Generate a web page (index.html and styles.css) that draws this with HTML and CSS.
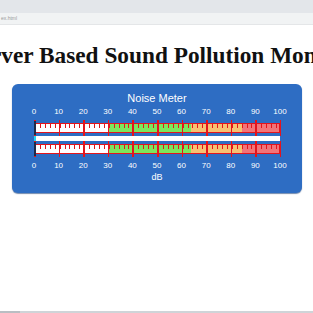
FILE: index.html
```html
<!DOCTYPE html>
<html lang="en">
<head>
    <meta charset="UTF-8">
    <meta name="viewport" content="width=device-width, initial-scale=1.0">
    <link rel="stylesheet" href="styles.css">
    <title>Noise Meter</title>
</head>
<body>
    <div class="tabs"></div>
    <div class="address">ex.html</div>

    <div class="title">
        <h1>IoT Server Based Sound Pollution Monitoring</h1>
    </div>

    <div class="panel">
        <div class="panel-title">Noise Meter</div>
        <div class="scale">
            <span>0</span><span>10</span><span>20</span><span>30</span><span>40</span><span>50</span>
            <span>60</span><span>70</span><span>80</span><span>90</span><span>100</span>
        </div>
        <div class="bar"><div class="needle"></div><div class="major"></div></div>
        <div class="level"><div class="level-fill"></div></div>
        <div class="bar"><div class="needle"></div><div class="major"></div></div>
        <div class="scale bottom">
            <span>0</span><span>10</span><span>20</span><span>30</span><span>40</span><span>50</span>
            <span>60</span><span>70</span><span>80</span><span>90</span><span>100</span>
        </div>
        <div class="unit">dB</div>
    </div>

    <div class="statusbar"></div>
</body>
</html>
```

FILE: styles.css
```css
body {
    margin: 0;
    height: 100vh;
    display: flex;
    flex-direction: column;
    font-family: "Liberation Sans", Arial, sans-serif;
    background: #fff;
    overflow: hidden;
}

.tabs {
    height: 13px;
    background-color: #e3e6ea;
}

.address {
    height: 11px;
    background-color: #f1f3f4;
    border-bottom: 1px solid #e4e6e8;
    font-size: 5px;
    line-height: 11px;
    color: #9a9a9a;
    padding-left: 1px;
}

.title {
    display: flex;
    justify-content: center;
    overflow: hidden;
    margin-top: 17px;
}

.title h1 {
    margin: 0 0 0 -3px;
    white-space: nowrap;
    font-family: "Liberation Serif", "Times New Roman", serif;
    font-size: 23.3px;
    line-height: 26px;
    color: #111;
}

.panel {
    margin: 16px 11px 0 12px;
    height: 109px;
    box-sizing: border-box;
    padding: 8px 22px 0 22px;
    background-color: #2e6dc3;
    border-radius: 6px;
    box-shadow: 0 1px 1px rgba(20, 60, 120, 0.6);
    color: #fff;
}

.panel-title {
    text-align: center;
    font-size: 11px;
    line-height: 13px;
}

.scale {
    display: flex;
    margin: 2px -12.3px 0 -12.3px;
    font-size: 8px;
    line-height: 10px;
}

.scale span {
    width: 24.6px;
    text-align: center;
}

.scale.bottom {
    margin-top: 7px;
}

.bar {
    position: relative;
    height: 10px;
    box-sizing: border-box;
    margin-top: 6px;
    border: 1.5px solid #e4141c;
    background:
        repeating-linear-gradient(to right, #e4141c 0 1px, transparent 1px 4.92px) top left / 100% 55% no-repeat,
        linear-gradient(to right, #fff 0 30%, #7ce65c 30% 64%, #f6c172 64% 85%, #f27478 85%);
}

.bar + .level {
    margin-top: 3px;
}

.level + .bar {
    margin-top: 3px;
}

.major {
    position: absolute;
    top: -4px;
    bottom: -4px;
    left: -1.5px;
    width: calc(100% + 3.5px);
    background: repeating-linear-gradient(to right, #e4141c 0 1.6px, transparent 1.6px 24.6px);
}

.needle {
    position: absolute;
    top: -3px;
    bottom: -3px;
    left: -1px;
    width: 1.5px;
    background-color: #1d2a4a;
    z-index: 1;
}

.level {
    height: 5px;
    background-color: #fff;
}

.level-fill {
    width: 2px;
    height: 100%;
    background-color: #22d3f0;
}

.unit {
    text-align: center;
    font-size: 9px;
    line-height: 11px;
    margin-top: 1px;
}

.statusbar {
    margin-top: auto;
    height: 2px;
    background: linear-gradient(to right, #b9bec3 0 20px, #cfd4d8 20px);
}
```
